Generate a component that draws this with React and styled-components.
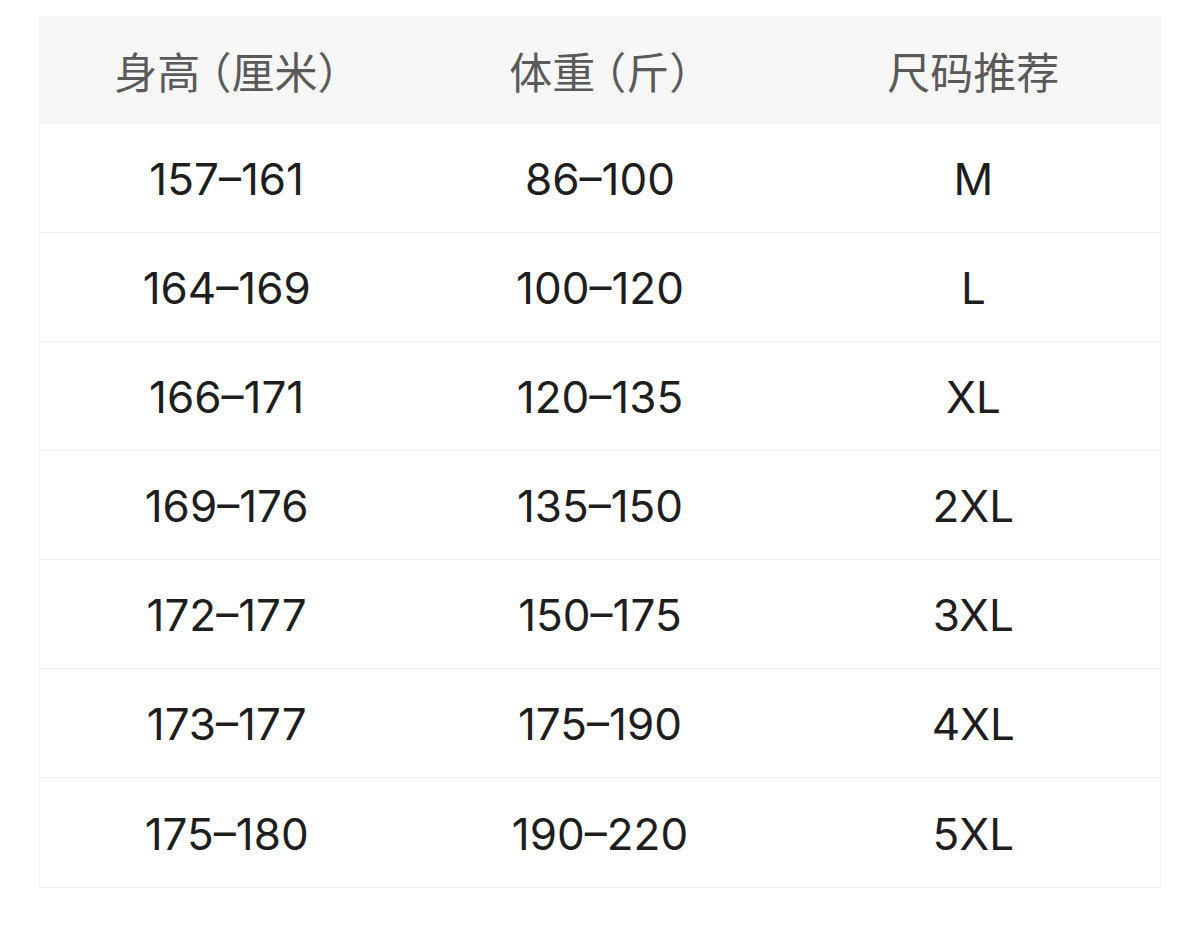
import { createGlobalStyle } from "styled-components";
import styled from "styled-components";

const GlobalStyle = createGlobalStyle`
  html, body {
    margin: 0;
    padding: 0;
    background: #ffffff;
  }
`;

const Page = styled.div`
  padding: 16px 39px 0 39px;
`;

const Table = styled.div`
  border: 1px solid #efefef;
  border-top: none;
`;

const Row = styled.div`
  display: grid;
  grid-template-columns: repeat(3, 1fr);
  box-sizing: border-box;
  height: ${(props) => (props.head ? "108px" : "109px")};
  background: ${(props) => (props.head ? "#f7f7f7" : "#ffffff")};
  border-bottom: ${(props) => (props.last || props.head ? "none" : "1px solid #efefef")};
`;

const HeadCell = styled.div`
  display: flex;
  align-items: center;
  justify-content: center;
  font-family: "Noto Sans CJK SC", "Liberation Sans", sans-serif;
  font-size: 43px;
  color: #5a5a5a;
  font-feature-settings: "halt";
`;

const Cell = styled.div`
  display: flex;
  align-items: center;
  justify-content: center;
  font-family: Inter, "Liberation Sans", sans-serif;
  font-size: 44px;
  color: #1e1e1e;
  padding-top: 2px;
`;

const headers = ["身高 （厘米）", "体重 （斤）", "尺码推荐"];

const rows = [
  ["157–161", "86–100", "M"],
  ["164–169", "100–120", "L"],
  ["166–171", "120–135", "XL"],
  ["169–176", "135–150", "2XL"],
  ["172–177", "150–175", "3XL"],
  ["173–177", "175–190", "4XL"],
  ["175–180", "190–220", "5XL"],
];

function App() {
  return (
    <>
      <GlobalStyle />
      <Page>
        <Table>
          <Row head>
            {headers.map((h, i) => (
              <HeadCell key={i}>{h}</HeadCell>
            ))}
          </Row>
          {rows.map((r, index) => (
            <Row key={index} last={index === rows.length - 1}>
              {r.map((c, i) => (
                <Cell key={i}>{c}</Cell>
              ))}
            </Row>
          ))}
        </Table>
      </Page>
    </>
  );
}

export default App;
